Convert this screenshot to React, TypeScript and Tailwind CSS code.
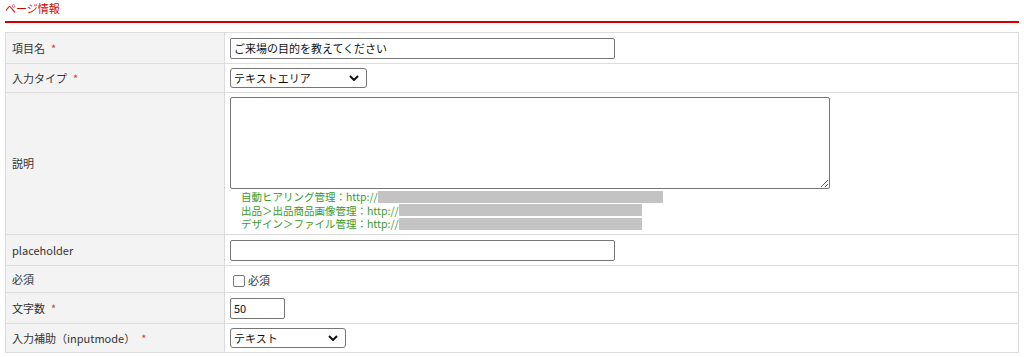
import React from "react";

const Req = () => <span className="text-[#e3312d] ml-[6px]">*</span>;

function Row({ label, req, h, children, top, start }: { label: string; req?: boolean; h: string; children: React.ReactNode; top?: boolean; start?: boolean }) {
	return (
		<div className={`grid grid-cols-[219px_1fr] ${top ? "" : "border-t border-[#dcdcdc]"}`}>
			<div className={`bg-[#f3f3f3] border-r border-[#dcdcdc] flex items-center pl-[6px] ${h}`}>
				<span>
					{label}
					{req && <Req />}
				</span>
			</div>
			<div className={`flex flex-col pl-[5px] ${start ? "justify-start" : "justify-center"}`}>{children}</div>
		</div>
	);
}

const Chevron = () => (
	<svg className="absolute right-[7px] top-1/2 -translate-y-1/2" width="10" height="6" viewBox="0 0 10 6">
		<path d="M1 1l4 4 4-4" fill="none" stroke="#111" strokeWidth="2" />
	</svg>
);

function Select({ w, value }: { w: string; value: string }) {
	return (
		<div className={`relative ${w} h-[20px] border border-[#767676] rounded-[3px] bg-white flex items-center pl-[3px]`}>
			<span className="leading-none text-[#111]">{value}</span>
			<Chevron />
		</div>
	);
}

export default function App() {
	return (
		<div className="px-[5px] bg-white text-[11px] text-[#333] font-['Meiryo','Noto_Sans_CJK_JP',sans-serif]">
			<h2 className="text-[11px] text-[#d40000] leading-[17px] pb-[4px] border-b-[2px] border-[#d40000] font-normal">ページ情報</h2>
			<div className="mt-[9px] w-[1014px] border border-[#dcdcdc]">
				<Row label="項目名" req h="h-[30px]" top>
					<input
						className="w-[385px] h-[21px] border border-[#767676] rounded-[2px] px-[3px] text-[11px] text-[#111] outline-none"
						defaultValue="ご来場の目的を教えてください"
					/>
				</Row>
				<Row label="入力タイプ" req h="h-[28px]">
					<Select w="w-[137px]" value="テキストエリア" />
				</Row>
				<Row label="説明" h="h-[141px]" start>
					<div className="pt-[4px]">
						<textarea className="block w-[600px] h-[92px] border border-[#767676] rounded-[2px] outline-none" />
						<div className="pl-[11px] pt-[1px] text-[#3a9a2a] text-[10.5px] leading-[13.5px]">
							<div className="flex items-center h-[13.5px]">
								<span>自動ヒアリング管理：http://</span>
								<span className="inline-block w-[285px] h-[12px] bg-[#c3c3c3]" />
							</div>
							<div className="flex items-center h-[13.5px]">
								<span>出品＞出品商品画像管理：http://</span>
								<span className="inline-block w-[243px] h-[12px] bg-[#c3c3c3]" />
							</div>
							<div className="flex items-center h-[13.5px]">
								<span>デザイン＞ファイル管理：http://</span>
								<span className="inline-block w-[243px] h-[12px] bg-[#c3c3c3]" />
							</div>
						</div>
					</div>
				</Row>
				<Row label="placeholder" h="h-[30px]">
					<input className="w-[385px] h-[21px] border border-[#767676] rounded-[2px] outline-none" />
				</Row>
				<Row label="必須" h="h-[26px]">
					<label className="flex items-center pl-[3px] pt-[3px]">
						<span className="inline-block w-[12px] h-[12px] border border-[#767676] rounded-[2px] bg-white" />
						<span className="ml-[3px]">必須</span>
					</label>
				</Row>
				<Row label="文字数" req h="h-[30px]">
					<input
						className="w-[55px] h-[21px] border border-[#767676] rounded-[2px] px-[3px] text-[11px] text-[#111] outline-none"
						defaultValue="50"
					/>
				</Row>
				<Row label="入力補助（inputmode）" req h="h-[28px]">
					<Select w="w-[116px]" value="テキスト" />
				</Row>
			</div>
		</div>
	);
}
